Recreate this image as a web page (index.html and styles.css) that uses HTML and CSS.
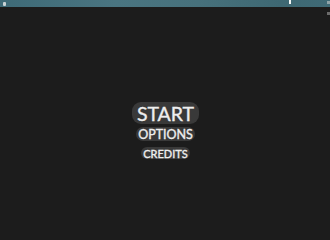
FILE: index.html
```html
<!DOCTYPE html>
<html>
<head>
<meta charset="utf-8">
<link rel="stylesheet" href="styles.css">
</head>
<body>
<div class="sky">
  <span class="mark mark-left"></span>
  <span class="mark mark-cursor"></span>
  <span class="mark mark-right"></span>
</div>
<span class="mark mark-right2"></span>
<main class="menu">
  <div class="item item-start">START</div>
  <div class="item item-options">OPTIONS</div>
  <div class="item item-credits">CREDITS</div>
</main>
</body>
</html>
```

FILE: styles.css
```css
html, body {
  margin: 0;
  padding: 0;
  width: 330px;
  height: 220px;
  background: #1c1c1c;
  overflow: hidden;
  font-family: Lato, "Liberation Sans", sans-serif;
}
.sky {
  position: relative;
  height: 7px;
  background: linear-gradient(90deg, #3e6a77 0%, #4a7581 35%, #47717c 60%, #3e6873 85%, #3f6a76 100%);
}
.mark {
  position: absolute;
  display: block;
  background: #c9d2d4;
}
.mark-left {
  left: 3px;
  top: 2px;
  width: 3px;
  height: 4px;
  border-radius: 1px;
}
.mark-cursor {
  left: 289px;
  top: 0;
  width: 2px;
  height: 4px;
  background: #f2f5f5;
}
.mark-right {
  left: 327px;
  top: 1px;
  width: 3px;
  height: 3px;
  background: #8fa3a8;
}
.mark-right2 {
  left: 327px;
  top: 12px;
  width: 3px;
  height: 3px;
  background: #6b6b6b;
}
.menu {
  display: flex;
  flex-direction: column;
  align-items: center;
  padding-top: 95px;
  padding-left: 1px;
}
.item {
  color: #eeeeee;
  background: #393939;
  line-height: 1;
  white-space: nowrap;
  -webkit-text-stroke: 0.35px #eeeeee;
}
.item-start {
  font-size: 19.5px;
  padding: 2px 5px 1px;
  height: 19px;
  line-height: 20px;
  border-radius: 9px;
}
.item-options {
  margin-top: 3px;
  font-size: 12.5px;
  padding: 0 2px;
  height: 14px;
  line-height: 15px;
  border-radius: 7px;
}
.item-credits {
  margin-top: 6px;
  font-size: 11px;
  padding: 0 2px;
  height: 12px;
  line-height: 13px;
  border-radius: 6px;
}
```
